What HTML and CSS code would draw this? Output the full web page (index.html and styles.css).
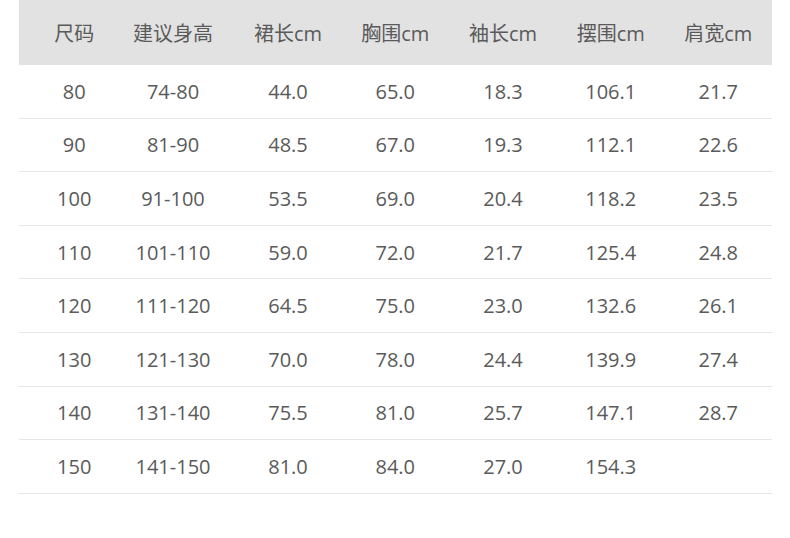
FILE: index.html
```html
<!DOCTYPE html>
<html lang="zh">
<head>
<meta charset="utf-8">
<title>尺码表</title>
<link rel="stylesheet" href="styles.css">
</head>
<body>
<div class="size-table">
  <div class="row head">
    <div class="cell">尺码</div><div class="cell">建议身高</div><div class="cell">裙长cm</div><div class="cell">胸围cm</div><div class="cell">袖长cm</div><div class="cell">摆围cm</div><div class="cell">肩宽cm</div>
  </div>
  <div class="row">
    <div class="cell">80</div><div class="cell">74-80</div><div class="cell">44.0</div><div class="cell">65.0</div><div class="cell">18.3</div><div class="cell">106.1</div><div class="cell">21.7</div>
  </div>
  <div class="row">
    <div class="cell">90</div><div class="cell">81-90</div><div class="cell">48.5</div><div class="cell">67.0</div><div class="cell">19.3</div><div class="cell">112.1</div><div class="cell">22.6</div>
  </div>
  <div class="row">
    <div class="cell">100</div><div class="cell">91-100</div><div class="cell">53.5</div><div class="cell">69.0</div><div class="cell">20.4</div><div class="cell">118.2</div><div class="cell">23.5</div>
  </div>
  <div class="row">
    <div class="cell">110</div><div class="cell">101-110</div><div class="cell">59.0</div><div class="cell">72.0</div><div class="cell">21.7</div><div class="cell">125.4</div><div class="cell">24.8</div>
  </div>
  <div class="row">
    <div class="cell">120</div><div class="cell">111-120</div><div class="cell">64.5</div><div class="cell">75.0</div><div class="cell">23.0</div><div class="cell">132.6</div><div class="cell">26.1</div>
  </div>
  <div class="row">
    <div class="cell">130</div><div class="cell">121-130</div><div class="cell">70.0</div><div class="cell">78.0</div><div class="cell">24.4</div><div class="cell">139.9</div><div class="cell">27.4</div>
  </div>
  <div class="row">
    <div class="cell">140</div><div class="cell">131-140</div><div class="cell">75.5</div><div class="cell">81.0</div><div class="cell">25.7</div><div class="cell">147.1</div><div class="cell">28.7</div>
  </div>
  <div class="row">
    <div class="cell">150</div><div class="cell">141-150</div><div class="cell">81.0</div><div class="cell">84.0</div><div class="cell">27.0</div><div class="cell">154.3</div><div class="cell"></div>
  </div>
</div>
</body>
</html>
```
FILE: styles.css
```css
html, body {
  margin: 0;
  padding: 0;
  background: #ffffff;
}

body {
  font-family: "Open Sans", "Noto Sans CJK SC", sans-serif;
  font-size: 20px;
  color: #5a5a5a;
}

.size-table {
  margin-left: 19px;
  width: 753px;
}

.row {
  display: grid;
  grid-template-columns: 104.5px 107px 111px 107.5px 108px 107.5px 107.5px;
  align-items: center;
  height: 53.6px;
  box-sizing: border-box;
  border-bottom: 1px solid #e6e6e6;
}

.row.head {
  height: 65px;
  background: #e2e2e2;
  border-bottom: none;
}

.cell {
  text-align: center;
  white-space: nowrap;
}

.cell:nth-child(1) {
  padding-left: 6px;
}

.cell:nth-child(2) {
  padding-right: 8px;
}

.cell:nth-child(3) {
  padding-left: 4px;
}
```
